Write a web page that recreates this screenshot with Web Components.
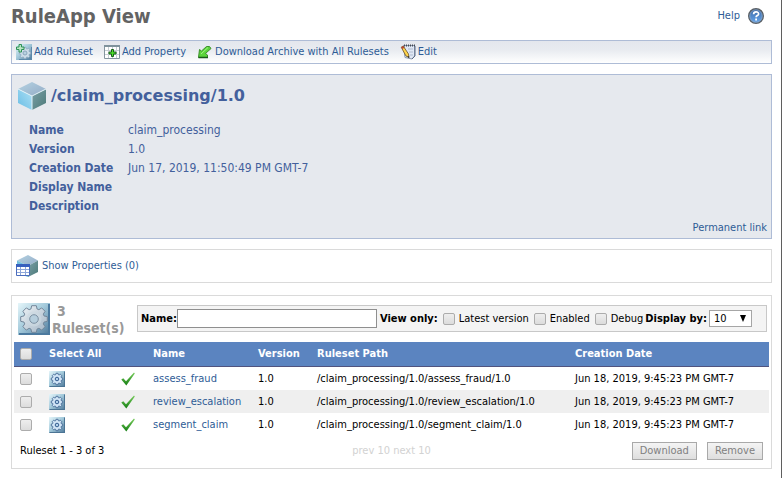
<!DOCTYPE html>
<html lang="en">
<head>
<meta charset="utf-8">
<title>RuleApp View</title>
<style>
html { min-height: 100%; display: grid; }
body {
  margin: 0; padding: 0 9px 8px 11px; border-right: 1px solid #5f5f5f;
  font: 11px/16px "DejaVu Sans Condensed", "DejaVu Sans", sans-serif;
  background: #fff; color: #000;
  --ink: #43609c; --link: #2e5c96; --line: #aebcd6; --grey-line: #dadada;
}
</style>
</head>
<body>
<page-header heading="RuleApp View"></page-header>
<tool-bar>
  <tool-link icon="add-ruleset">Add Ruleset</tool-link>
  <tool-link icon="add-property">Add Property</tool-link>
  <tool-link icon="archive">Download Archive with All Rulesets</tool-link>
  <tool-link icon="edit">Edit</tool-link>
</tool-bar>
<detail-panel heading="/claim_processing/1.0">
  <detail-row label="Name">claim_processing</detail-row>
  <detail-row label="Version">1.0</detail-row>
  <detail-row label="Creation Date">Jun 17, 2019, 11:50:49 PM GMT-7</detail-row>
  <detail-row label="Display Name"></detail-row>
  <detail-row label="Description"></detail-row>
</detail-panel>
<property-box><tool-link icon="properties" size="24">Show Properties (0)</tool-link></property-box>
<ruleset-section>
  <filter-bar slot="filter"></filter-bar>
  <ruleset-table></ruleset-table>
</ruleset-section>

<script>
const define = (name, html, setup) => customElements.define(name, class extends HTMLElement {
  connectedCallback() {
    if (this.shadowRoot) return;
    const root = this.attachShadow({ mode: "open" });
    root.innerHTML = typeof html === "function" ? html(this) : html;
    if (setup) setup(this, root);
  }
});

const gearPath = (c, outer, inner) => {
  const pts = [];
  for (let i = 0; i < 8; i++) {
    [[-17, inner], [-10, outer], [10, outer], [17, inner]].forEach(([d, r]) => {
      const a = (i * 45 + d) * Math.PI / 180;
      pts.push((c + r * Math.sin(a)).toFixed(1) + " " + (c - r * Math.cos(a)).toFixed(1));
    });
  }
  return "M" + pts.join("L") + "z";
};
const tile = `<defs><linearGradient id="t" x1="0" y1="0" x2="1" y2="1"><stop offset="0" stop-color="#e6f6fa"/><stop offset=".45" stop-color="#a5cbdc"/><stop offset="1" stop-color="#4a7698"/></linearGradient>
  <linearGradient id="g" x1="0" y1="0" x2="1" y2="1"><stop offset="0" stop-color="#eef3f6"/><stop offset="1" stop-color="#a3b5c6"/></linearGradient></defs>`;
const cube = (id) => `<defs>
  <linearGradient id="${id}a" x1="0" y1="0" x2="1" y2="1"><stop offset="0" stop-color="#b4d2e2"/><stop offset="1" stop-color="#93abc6"/></linearGradient>
  <linearGradient id="${id}b" x1="1" y1="0" x2="0" y2="1"><stop offset="0" stop-color="#aee0f5"/><stop offset="1" stop-color="#69bde4"/></linearGradient>
  <linearGradient id="${id}c" x1="0" y1="0" x2="1" y2="1"><stop offset="0" stop-color="#7ba0a8"/><stop offset="1" stop-color="#4c7a78"/></linearGradient></defs>`;
const ICONS = {
  "add-ruleset": ["0 0 16 16", tile + `<path fill="url(#t)" d="M0 0h16v16H0z"/><path d="M3 15.500h12.500V3" fill="none" stroke="#5c89ab"/>
    <path d="${gearPath(9, 5.8, 4.4)}" fill="#cddde9" stroke="#8aa4ba" stroke-width=".7"/><circle cx="9" cy="9" r="2" fill="#b9d1e0" stroke="#7f9ab2" stroke-width=".8"/>
    <path d="M3 .5h2.500V3H8v2.500H5.500V8H3V5.500H.5V3H3z" fill="#b9e5c2" stroke="#2d9157"/>`],
  "add-property": ["0 0 16 16", `<path fill="#fff" stroke="#85959f" d="M.5 1.500h15v13H.5z"/><path fill="#7f929c" d="M0 1h16v2H0z"/><path d="M4.500 3v11M8.500 3v11M12.500 3v11M1 6.500h14M1 10.500h14" stroke="#c6ced3"/>
    <path d="M7.500 5.500h2V8H12v2H9.500v2.500h-2V10H5V8h2.500z" fill="#4ee02a" stroke="#17601b"/>`],
  archive: ["0 0 16 16", `<path d="M1.500 13.500h9v-2.500l-2-1.500 5.500-5-1.500-2H9.500L4.500 7 2.500 5.500z" fill="#5bd43b" stroke="#3d8f2c"/><path d="M1.500 13.500h9.500" stroke="#195b19" stroke-width="1.500"/><path d="M4 10l7-6.500" stroke="#a4f384"/>`],
  edit: ["0 0 16 16", `<path d="M3.500 1.500h11v10.500l-2.500 3-7-1.500z" fill="#dfe7f4" stroke="#8c98ad"/><path d="M4 1.500h11" stroke="#454a55" stroke-dasharray="1 1" stroke-width="2"/><path d="M8 5h5M9 8h4M10 11h3" stroke="#b0bbcf"/><path d="M15 2v10l-3 3" fill="none" stroke="#5d6c87"/>
    <path d="M1.200 3.200l2-1.200L8.500 10l.5 3.500L6 12z" fill="#ffd44a" stroke="#665028" stroke-width=".8"/><path d="M1.200 3.200l2-1.200 1.100 1.700-2 1.300z" fill="#b94635"/><path d="M7.300 12.500l2 1.800-.3-2z" fill="#222"/>`],
  help: ["0 0 16 16", `<defs><linearGradient id="h" x1="0" y1="0" x2="0" y2="1"><stop offset="0" stop-color="#3a66a4"/><stop offset="1" stop-color="#67a8ee"/></linearGradient></defs>
    <circle cx="8" cy="8" r="7.300" fill="url(#h)" stroke="#5a6066" stroke-width="1.400"/><circle cx="8" cy="8" r="6.200" fill="none" stroke="#8fa6c0" stroke-width=".7"/><path d="M5.600 6.200c0-3 5-3 5-.3 0 1.700-2.500 1.600-2.500 3.300" fill="none" stroke="#fff" stroke-width="1.700"/><path fill="#fff" d="M7.200 10.600H9v1.800H7.200z"/>`],
  cube: ["0 0 28 28", cube("q") + `<path d="M14 0l14 7-14 7L0 7z" fill="url(#qa)"/><path d="M0 7l14 7v14L0 21z" fill="url(#qb)"/><path d="M28 7l-14 7v14l14-7z" fill="url(#qc)"/><path d="M0 7l14 7 14-7M14 14v14" fill="none" stroke="#e2f2f7"/>`],
  properties: ["0 0 24 24", cube("p") + `<path d="M12 1l10 5.500L12 12 1 6.500z" fill="url(#pa)"/><path d="M1 6.500L12 12v11L1 19z" fill="#74bfdd"/><path d="M22 6.500L12 12v11l10-5z" fill="url(#pc)"/>
    <path d="M.5 10.500h13v11H.5z" fill="#fff" stroke="#4a6cbd"/><path fill="#3860be" d="M0 10h14v3H0z"/><path d="M4.500 13v8M9.500 13v8M1 15.500h12M1 18.500h12" stroke="#8ea7da"/>`],
  gears: ["0 0 32 32", tile + `<path fill="url(#t)" d="M0 0h32v32H0z"/><path d="M1 31h30V1" fill="none" stroke="#4c7a9f" stroke-width="2"/><path d="${gearPath(16, 13.5, 10.5)}" fill="url(#g)" stroke="#74879a" stroke-linejoin="round"/><circle cx="16" cy="16" r="7.500" fill="#ccd8e1" opacity=".7"/><circle cx="16" cy="16" r="4.300" fill="#b6cedd" stroke="#7d91a3"/>`],
  gear: ["0 0 16 16", tile + `<path fill="url(#t)" d="M0 0h16v16H0z"/><path d="M.5 15.500h15V.5" fill="none" stroke="#4b7494"/><path d="${gearPath(8, 5.8, 4.5)}" fill="#d3e6f7" stroke="#486c97" stroke-width=".9"/><circle cx="8" cy="8" r="1.800" fill="#b2d1ea" stroke="#345d90"/>`],
  tick: ["0 0 14 14", `<defs><linearGradient id="k" x1="0" y1="0" x2="0" y2="1"><stop offset="0" stop-color="#79cd5c"/><stop offset="1" stop-color="#137e12"/></linearGradient></defs><path d="M.3 7.500l2-1.300 2.700 3L13 .5l.8 1L5.300 13.500z" fill="url(#k)"/>`],
};

define("app-icon", (el) => {
  const [box, art] = ICONS[el.getAttribute("name")];
  const size = el.getAttribute("size") || 16;
  return `<style>:host{display:block;flex:none;width:${size}px;height:${size}px}svg{display:block;width:100%;height:100%}</style><svg viewBox="${box}" aria-hidden="true">${art}</svg>`;
});

define("page-header", (el) => `<style>
  :host{display:flex;justify-content:space-between;align-items:center;height:32px;padding-right:8px}
  h1{margin:0;font:bold 20px/32px "DejaVu Sans Condensed",sans-serif;color:#636363}
  a{display:flex;align-items:center;gap:8px;color:var(--link);text-decoration:none}
  </style><h1>${el.getAttribute("heading")}</h1><a href="#help">Help<app-icon name="help"></app-icon></a>`);

define("tool-bar", `<style>
  :host{display:flex;align-items:center;gap:11px;box-sizing:border-box;height:24px;margin-top:8px;padding:0 4px;border:1px solid var(--line);background:linear-gradient(#e4e7ed,#e8ebf0 40%,#fff)}
  </style><slot></slot>`);

define("tool-link", (el) => `<style>
  :host{display:block}
  a{display:flex;align-items:center;gap:2px;color:var(--link);text-decoration:none;white-space:nowrap}
  </style><a href="#"><app-icon name="${el.getAttribute("icon")}" size="${el.getAttribute("size") || 16}"></app-icon><slot></slot></a>`);

define("detail-panel", (el) => `<style>
  :host{display:block;margin-top:10px;padding:7px 4px 2px 6px;border:1px solid var(--line);background:#e6e9ee;color:var(--ink)}
  header{display:flex;align-items:center;gap:5px}
  h2{margin:0;font:bold 16px/28px "DejaVu Sans",sans-serif}
  .rows{padding:11px 0 4px 11px}
  footer{text-align:right}
  footer a{color:var(--link);text-decoration:none}
  </style><header><app-icon name="cube" size="28"></app-icon><h2>${el.getAttribute("heading")}</h2></header>
  <div class="rows"><slot></slot></div><footer><a href="#link">Permanent link</a></footer>`);

define("detail-row", (el) => `<style>
  :host{display:grid;grid-template-columns:99px 1fr;font-size:12px;line-height:19px}
  b{white-space:nowrap}
  </style><b>${el.getAttribute("label")}</b><span><slot></slot></span>`);

define("property-box", `<style>
  :host{display:block;margin-top:10px;padding:4px;border:1px solid var(--grey-line)}
  </style><slot></slot>`);

define("ruleset-section", `<style>
  :host{display:block;margin-top:12px;padding:7px 2px 8px;border:1px solid var(--grey-line)}
  header{display:flex;align-items:flex-start;padding:0 2px 5px 4px}
  h2{box-sizing:border-box;flex:none;width:87px;margin:0;padding-left:2px;font:bold 14px/17px "DejaVu Sans Condensed",sans-serif;color:#999}
  h2 span{display:block;padding-left:5px}
  slot[name=filter]{display:block;flex:1}
  </style><header><app-icon name="gears" size="32"></app-icon><h2><span>3</span>Ruleset(s)</h2><slot name="filter"></slot></header><slot></slot>`);

const CHECKBOX = `input[type=checkbox]{appearance:none;flex:none;box-sizing:border-box;width:12px;height:12px;margin:0;border:1px solid #acacac;border-radius:2px;background:linear-gradient(#eee,#dcdcdc);display:block}input[type=checkbox]:checked{background:#5b84c0}`;

define("filter-bar", `<style>${CHECKBOX}
  :host{display:block;margin-top:2px}
  form{display:flex;align-items:center;box-sizing:border-box;height:27px;padding:0 3px;border:1px solid #c8c8c8;background:#f4f4f4;white-space:nowrap}
  label{display:flex;align-items:center}
  .name{font-weight:bold}
  .name input{box-sizing:border-box;width:200px;height:19px;margin:0;padding:0 2px;border:1px solid #8f8f8f;background:#fff;font:inherit}
  .view{margin-left:3px}
  .option{gap:4px;margin-left:5px}
  .by{margin-left:2px;gap:2px}
  .box{display:grid;align-items:center}
  .box>*{grid-area:1/1}
  .box svg{justify-self:end;margin-right:6px;width:6px;height:7px;pointer-events:none}
  select{appearance:none;box-sizing:border-box;width:43px;height:17px;margin:0;padding:0 4px;border:1px solid #a6a6a6;border-radius:0;background:#fff;color:#000;font:inherit;line-height:15px}
  </style><form>
  <label class="name">Name:<input type="text"></label>
  <b class="view">View only:</b>
  <label class="option"><input type="checkbox">Latest version</label>
  <label class="option"><input type="checkbox">Enabled</label>
  <label class="option"><input type="checkbox">Debug</label>
  <label class="by"><b>Display by:</b><span class="box"><select><option>10</option><option>20</option><option>50</option></select><svg viewBox="0 0 6 7"><path d="M0 0h6L3 7z"/></svg></span></label>
  </form>`);

const RULESETS = ["assess_fraud", "review_escalation", "segment_claim"];
define("ruleset-table", `<style>${CHECKBOX}
  :host{display:block}
  table{width:100%;border-collapse:separate;border-spacing:0;table-layout:fixed}
  th,td{padding:0;text-align:left;white-space:nowrap}
  th{height:24px;background:#5b84c0;color:#fff;border-bottom:1px solid #50537e}
  td{height:23px}
  th:first-child,td:first-child{padding-left:6px}
  tbody tr:nth-child(even){background:#efefef}
  a{color:var(--link);text-decoration:none}
  footer{display:grid;grid-template-columns:1fr auto 1fr;align-items:center;padding:6px 6px 0}
  .pager{color:#d2d2d2}
  .actions{display:flex;justify-content:flex-end;gap:10px}
  button{box-sizing:border-box;height:18px;padding:0 7px;border:1px solid #a9a9a9;background:linear-gradient(#f4f4f4,#dedede);color:#808080;font:inherit;line-height:14px}
  </style><table><colgroup><col style="width:35px"><col style="width:72px"><col style="width:32px"><col style="width:105px"><col style="width:59px"><col style="width:258px"><col></colgroup>
  <thead><tr><th><input type="checkbox" aria-label="Select all rulesets"></th><th colspan="2">Select All</th><th>Name</th><th>Version</th><th>Ruleset Path</th><th>Creation Date</th></tr></thead>
  <tbody>${RULESETS.map((n) => `<tr><td><input type="checkbox" aria-label="Select ${n}"></td><td><app-icon name="gear"></app-icon></td><td><app-icon name="tick" size="14"></app-icon></td><td><a href="#${n}">${n}</a></td><td>1.0</td><td>/claim_processing/1.0/${n}/1.0</td><td>Jun 18, 2019, 9:45:23 PM GMT-7</td></tr>`).join("")}</tbody></table>
  <footer><span>Ruleset 1 - 3 of 3</span><span class="pager">prev 10 next 10</span><span class="actions"><button type="button" disabled>Download</button><button type="button" disabled>Remove</button></span></footer>`);
</script>
</body>
</html>
